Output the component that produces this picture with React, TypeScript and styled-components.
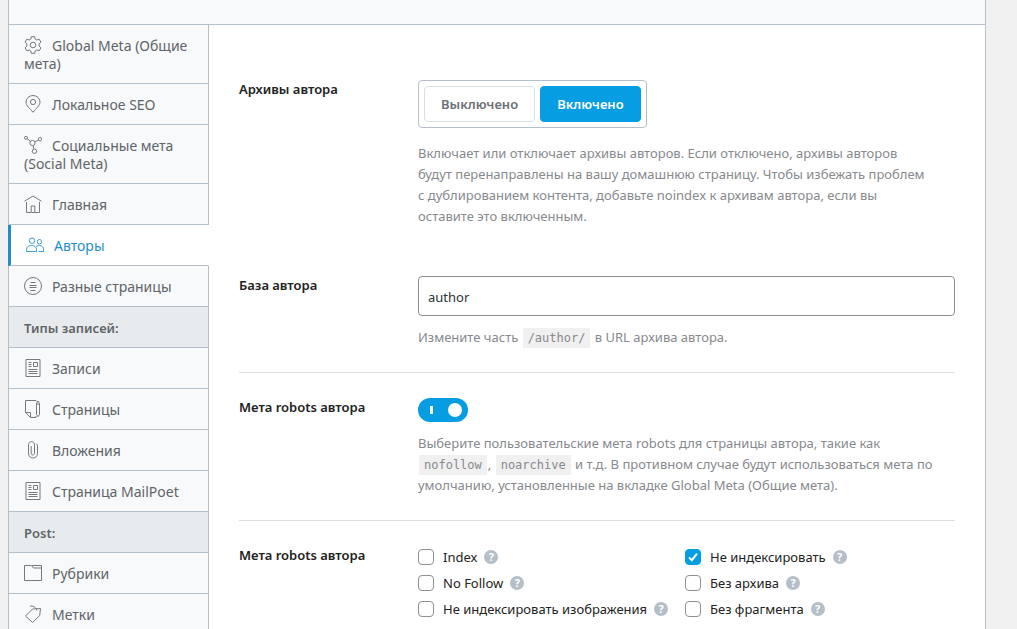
import React, { useState } from "react";
import styled, { createGlobalStyle, css } from "styled-components";

const blue = "#069de3";
const line = "#b5bfc9";

const GlobalStyle = createGlobalStyle`
  *, *::before, *::after { box-sizing: border-box; }
  body {
    margin: 0;
    background: #f0f0f1;
    color: #222;
    font: 14px/18px "Segoe UI", "Noto Sans", sans-serif;
  }
`;

const Panel = styled.div`
  display: flex;
  flex-direction: column;
  min-height: 100vh;
  margin: 0 31px 0 8px;
  border: 1px solid ${line};
  border-width: 0 1px;
  background: #fff;
`;

const PanelHeader = styled.header`
  height: 25px;
  border-bottom: 1px solid ${line};
  background: #f7f9fb;
`;

const PanelBody = styled.div`
  display: grid;
  grid-template-columns: 200px minmax(0, 1fr);
  flex: 1;
`;

const Tabs = styled.nav`
  display: flex;
  flex-direction: column;
`;

const Tab = styled.a<{ $active?: boolean }>`
  display: block;
  padding: 12px 15px 10px;
  border: 0 solid ${line};
  border-width: 0 1px 1px 0;
  background: #f7f9fb;
  color: #5f6468;
  font-size: 14px;
  text-decoration: none;
  ${(p) =>
    p.$active &&
    css`
      margin-left: -1px;
      border-left: 3px solid #1e90c6;
      border-right-color: transparent;
      background: #fff;
      color: #1e90c6;
    `}
`;

const TabGroup = styled.h2`
  margin: 0;
  padding: 12px 15px 10px;
  border: 0 solid ${line};
  border-width: 0 1px 1px 0;
  background: #e8ebee;
  color: #5f6468;
  font-size: 13px;
  line-height: 18px;
  font-weight: 600;
`;

const TabIcon = styled.svg`
  width: 18px;
  height: 18px;
  margin: -1px 10px 0 0;
  vertical-align: top;
  fill: none;
  stroke: currentColor;
  stroke-width: 1;
  opacity: 0.85;
`;

const Form = styled.main`
  padding: 30px;
`;

const Row = styled.section<{ $divided?: boolean }>`
  display: grid;
  grid-template-columns: 179px minmax(0, 1fr);
  padding: 25px 0 24px;
  border-bottom: ${(p) => (p.$divided ? "1px solid #dcdfe2" : "0")};
`;

const RowTitle = styled.label`
  font-size: 13px;
  font-weight: 600;
`;

const Help = styled.p`
  margin: 11px 0 0;
  color: #86898d;
  font-size: 13px;
  line-height: 21px;
`;

const Code = styled.code`
  margin: 0 1px;
  padding: 3px 5px;
  background: #f0f0f1;
  font: 12px "DejaVu Sans Mono", monospace;
`;

const Segments = styled.div`
  display: inline-flex;
  gap: 5px;
  margin-bottom: 4px;
  padding: 5px;
  border: 1px solid ${line};
  border-radius: 4px;
  vertical-align: top;
`;

const Segment = styled.button<{ $on: boolean }>`
  height: 36px;
  padding: 0 16px;
  border: 1px solid ${(p) => (p.$on ? blue : "#dcdfe2")};
  border-radius: 4px;
  background: ${(p) => (p.$on ? blue : "#fff")};
  color: ${(p) => (p.$on ? "#fff" : "#6c7075")};
  font: 600 13px/18px "Segoe UI", "Noto Sans", sans-serif;
`;

const TextField = styled.input`
  display: block;
  width: 100%;
  height: 40px;
  padding: 2px 9px 0;
  border: 1px solid #8c8f94;
  border-radius: 4px;
  background: #fff;
  color: #2c3338;
  font: 13px "Segoe UI", "Noto Sans", sans-serif;
`;

const Switch = styled.input`
  appearance: none;
  display: flex;
  align-items: center;
  justify-content: space-between;
  width: 50px;
  height: 24px;
  margin: 0;
  padding: 0 6px 0 12px;
  border-radius: 12px;
  background: #b5bfc9;
  &:checked { background: ${blue}; }
  &::before {
    content: "";
    width: 3px;
    height: 8px;
    background: #fff;
  }
  &::after {
    content: "";
    width: 14px;
    height: 14px;
    border-radius: 50%;
    background: #fff;
  }
`;

const Checks = styled.div`
  display: grid;
  grid-template-columns: 267px minmax(0, 1fr);
  gap: 8px 0;
  margin: 2px 0;
`;

const Check = styled.label`
  display: flex;
  align-items: center;
  font-size: 13px;
  white-space: nowrap;
`;

const Box = styled.input`
  appearance: none;
  flex: none;
  width: 16px;
  height: 16px;
  margin: 0 9px 0 0;
  border: 1px solid #8c8f94;
  border-radius: 4px;
  background: #fff;
  &:checked {
    border-color: ${blue};
    background: ${blue} center / 14px 14px
      url("data:image/svg+xml,%3Csvg xmlns='http://www.w3.org/2000/svg' viewBox='0 0 14 14'%3E%3Cpath d='M3 7.4 5.8 10.2 11 3.6' fill='none' stroke='white' stroke-width='2'/%3E%3C/svg%3E");
  }
`;

const Hint = styled.span`
  display: grid;
  place-items: center;
  width: 14px;
  height: 14px;
  margin-left: 7px;
  border-radius: 50%;
  background: #b5bfc9;
  color: #fff;
  font-size: 11px;
  line-height: 14px;
  font-weight: 700;
`;

const icons: Record<string, React.ReactNode> = {
  gear: (
    <>
      <path d="M7.3 .7h3.4l.5 2.4 1.6 .9 2.4-.8 1.7 3-1.8 1.7v2.2l1.8 1.7-1.7 3-2.4-.8-1.6 .9-.5 2.4H7.3l-.5-2.4-1.6-.9-2.4 .8-1.7-3 1.8-1.7V7.9L1.1 6.2l1.7-3 2.4 .8 1.6-.9z" strokeLinejoin="round" />
      <circle cx="9" cy="9" r="2.8" />
    </>
  ),
  pin: (
    <>
      <path d="M9 17.3C6 13.5 2 10.7 2 7a7 6.5 0 0 1 14 0c0 3.7-4 6.5-7 10.3z" />
      <circle cx="9" cy="7" r="2.6" />
    </>
  ),
  social: (
    <>
      <circle cx="2" cy="1.8" r="1.5" />
      <circle cx="16" cy="3.2" r="1.7" />
      <circle cx="8.5" cy="7" r="2.6" />
      <circle cx="10.5" cy="15.2" r="2.2" />
      <path d="M3.2 2.7 6.5 5.3M10.9 6 14.4 4M9.1 9.6l.8 3.4" />
    </>
  ),
  home: <path d="M.5 6.2 9 1l8.500 5.2M2.500 7v10.500h4.700V11h3.600v6.500h4.700V7M7.500 17.500h3.300" />,
  users: (
    <>
      <circle cx="6" cy="4.7" r="2.7" />
      <circle cx="13.5" cy="5.7" r="2.2" />
      <path d="M.5 15.5v-1.700C.5 11 2.500 9.500 5.500 9.500s5 1.500 5 4.300v1.700zM10 10.600c1-.8 2.200-1.100 3.300-1.100 2.700 0 4.200 1.500 4.200 4v2h-5" />
    </>
  ),
  misc: (
    <>
      <circle cx="9" cy="9" r="8.5" />
      <path d="M6.500 5.500h5M5.500 8.500h7M5.500 10.500h7M6.500 13.500h5" />
    </>
  ),
  post: (
    <path d="M2 .5h14v17H2zM9.500 3.500h4v4h-4zM4.500 3.500h3M4.500 5.500h3M4.500 7.500h3M4.500 10.500h9M4.500 12.500h9M4.500 14.500h9" />
  ),
  page: (
    <path d="M12 1.500V.5H1.500v12l5 5H12v-1.500M1.500 12.500h5v5M12.500 3.500l1.500-2.500 1.500 2.500v11l-1.500 2.200-1.500-2.200zM12.500 4h3" />
  ),
  clip: (
    <path d="M4.500 4.500v7.800c0 6.300 9 6.300 9 0V4.500M4.500 5V4c0-4.500 6-4.500 6 0v8c0 2.600-3.300 2.600-3.300 0V5M13.500 4.500c0-1-.5-1.500-1.500-1.500" />
  ),
  folder: <path d="M.5 1.500h7l2 2.500h8v12.500H.5zM8 1.500h9.500V4" />,
  tag: (
    <path d="M8.500 4l8-.5-.8 7L8.600 17.500 1.500 11zM6 1c3.500-.3 5.800 1.200 7 4.500" strokeLinejoin="round" />
  ),
};

type Entry = { label: string; icon?: string; active?: boolean };

const entries: Entry[] = [
  { label: "Global Meta (Общие мета)", icon: "gear" },
  { label: "Локальное SEO", icon: "pin" },
  { label: "Социальные мета (Social Meta)", icon: "social" },
  { label: "Главная", icon: "home" },
  { label: "Авторы", icon: "users", active: true },
  { label: "Разные страницы", icon: "misc" },
  { label: "Типы записей:" },
  { label: "Записи", icon: "post" },
  { label: "Страницы", icon: "page" },
  { label: "Вложения", icon: "clip" },
  { label: "Страница MailPoet", icon: "post" },
  { label: "Post:" },
  { label: "Рубрики", icon: "folder" },
  { label: "Метки", icon: "tag" },
];

const robots = [
  "Index",
  "Не индексировать",
  "No Follow",
  "Без архива",
  "Не индексировать изображения",
  "Без фрагмента",
];

export default function App() {
  const [enabled, setEnabled] = useState(true);
  return (
    <>
      <GlobalStyle />
      <Panel>
        <PanelHeader />
        <PanelBody>
          <Tabs>
            {entries.map((e) =>
              e.icon ? (
                <Tab key={e.label} href="#" $active={e.active}>
                  <TabIcon viewBox="0 0 18 18" aria-hidden="true">
                    {icons[e.icon]}
                  </TabIcon>
                  {e.label}
                </Tab>
              ) : (
                <TabGroup key={e.label}>{e.label}</TabGroup>
              )
            )}
          </Tabs>
          <Form>
            <Row>
              <RowTitle as="span" id="archives">Архивы автора</RowTitle>
              <div>
                <Segments role="group" aria-labelledby="archives">
                  <Segment type="button" $on={!enabled} aria-pressed={!enabled} onClick={() => setEnabled(false)}>
                    Выключено
                  </Segment>
                  <Segment type="button" $on={enabled} aria-pressed={enabled} onClick={() => setEnabled(true)}>
                    Включено
                  </Segment>
                </Segments>
                <Help>
                  Включает или отключает архивы авторов. Если отключено, архивы авторов
                  <br />
                  будут перенаправлены на вашу домашнюю страницу. Чтобы избежать проблем
                  <br />
                  с дублированием контента, добавьте noindex к архивам автора, если вы
                  <br />
                  оставите это включенным.
                </Help>
              </div>
            </Row>
            <Row $divided>
              <RowTitle htmlFor="base">База автора</RowTitle>
              <div>
                <TextField id="base" type="text" defaultValue="author" />
                <Help>
                  Измените часть <Code>/author/</Code> в URL архива автора.
                </Help>
              </div>
            </Row>
            <Row $divided>
              <RowTitle htmlFor="custom">Мета robots автора</RowTitle>
              <div>
                <Switch id="custom" type="checkbox" role="switch" defaultChecked />
                <Help>
                  Выберите пользовательские мета robots для страницы автора, такие как
                  <br />
                  <Code>nofollow</Code>, <Code>noarchive</Code> и т.д. В противном случае будут использоваться мета по
                  <br />
                  умолчанию, установленные на вкладке Global Meta (Общие мета).
                </Help>
              </div>
            </Row>
            <Row>
              <RowTitle as="span" id="robots">Мета robots автора</RowTitle>
              <Checks role="group" aria-labelledby="robots">
                {robots.map((r) => (
                  <Check key={r}>
                    <Box type="checkbox" defaultChecked={r === "Не индексировать"} />
                    {r}
                    <Hint aria-hidden="true">?</Hint>
                  </Check>
                ))}
              </Checks>
            </Row>
          </Form>
        </PanelBody>
      </Panel>
    </>
  );
}
